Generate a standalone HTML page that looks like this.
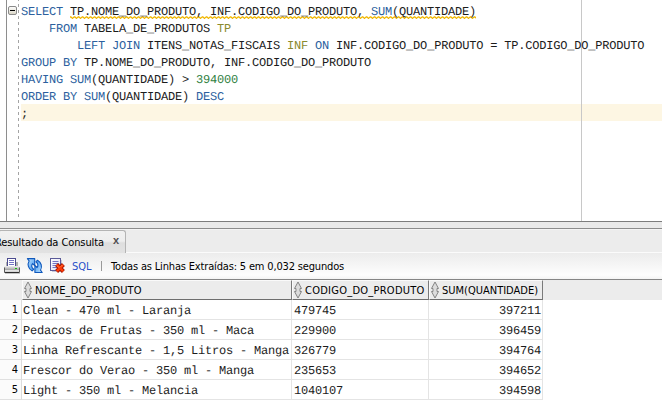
<!DOCTYPE html>
<html><head><meta charset="utf-8">
<style>
html,body{margin:0;padding:0;}
body{width:662px;height:417px;background:#fff;position:relative;overflow:hidden;font-family:"Liberation Sans",sans-serif;}
div,svg{position:absolute;}
.ed{left:0;top:0;width:662px;height:221px;background:#fff;}
.mono{font-family:"Liberation Mono",monospace;font-size:12px;letter-spacing:-0.2px;white-space:pre;color:#1c1c1c;text-rendering:geometricPrecision;}
.code{left:21px;top:4px;line-height:17px;}
.k{color:#2c5f9e;}
.a{color:#8c8a2e;}
.n{color:#2f7f3f;}
.hl{left:21px;top:104px;width:641px;height:17px;background:#fdf6e3;}
.margin{left:581px;top:0;width:1px;height:221px;background:#c8c8c8;}
.lb{left:6px;top:0;width:1px;height:221px;background:#8e8e8e;}
.gut{left:18px;top:0;width:1px;height:218px;background:repeating-linear-gradient(#a4a4a4 0,#a4a4a4 1px,#fff 1px,#fff 4px,#a4a4a4 4px,#a4a4a4 6px);}
.panel{left:0;top:221px;width:662px;height:196px;background:#ececec;}
.ui{font-family:"DejaVu Sans Condensed","Liberation Sans",sans-serif;font-size:11px;color:#000;white-space:nowrap;}
.tab{left:-2px;top:9px;width:128px;height:23px;border:1px solid #b4b4b4;border-bottom:none;border-radius:3px 3px 0 0;background:linear-gradient(#f1f1f1 0%,#eeeeee 46%,#dedede 54%,#e2e2e2 100%);box-sizing:border-box;}
.tb{left:0;top:32px;width:662px;height:26px;background:linear-gradient(#ececec 0%,#fdfdfd 85%,#f4f4f4 100%);}
.grid{left:0;top:58px;width:662px;height:138px;background:#fff;}
.hrow{left:0;top:0;width:662px;height:21px;background:#ececec;border-top:1px solid #858585;box-sizing:border-box;}
.hd{top:1px;height:20px;box-sizing:border-box;border-right:1px solid #7a7a7a;border-bottom:1px solid #6e6e6e;border-top:1px solid #fafafa;border-left:1px solid #fafafa;background:#ececec;}
.hd span{position:absolute;left:12px;top:3px;}
.row{left:0;width:543px;height:20px;}
.rn{left:0;top:0;width:22px;height:20px;box-sizing:border-box;border-bottom:1px solid #e0e0e0;border-right:1px solid #dcdcdc;text-align:right;padding-right:3px;line-height:19px;background:#fbfbfb}
.c{top:0;height:20px;box-sizing:border-box;border-bottom:1px solid #e4e4e4;border-right:1px solid #e4e4e4;line-height:22px;padding-left:1px;background:#fff;overflow:hidden}
.c.r{text-align:right;padding-right:1px}
.c.b{padding-left:2px}
</style></head><body>
<div class="ed">
<div class="hl"></div>
<div class="lb"></div>
<svg style="left:0;top:0" width="662" height="30" viewBox="0 0 662 30">
<defs>
<pattern id="wv" x="70" y="16" width="4" height="3" patternUnits="userSpaceOnUse"><path d="M0.5,0.5 L2.5,2.5 L4.5,0.5 M-1.5,2.5 L0.5,0.5" fill="none" stroke="#f0b600" stroke-width="1.15"/></pattern>
<linearGradient id="fg" x1="0" y1="0" x2="0" y2="1"><stop offset="0" stop-color="#ffffff"/><stop offset="1" stop-color="#d8d4c4"/></linearGradient>
</defs>
<rect x="70" y="16" width="406" height="3" fill="url(#wv)"/>
<rect x="8.5" y="6.5" width="8" height="8" rx="1.5" fill="url(#fg)" stroke="#8a8a8a"/><rect x="10" y="10" width="5" height="1" fill="#000"/></svg>
<div class="gut"></div>
<div class="margin"></div>
<div class="code mono"><span class="k">SELECT</span> TP.NOME_DO_PRODUTO, INF.CODIGO_DO_PRODUTO, <span class="k">SUM</span>(QUANTIDADE)
    <span class="k">FROM</span> TABELA_DE_PRODUTOS <span class="a">TP</span>
        <span class="k">LEFT JOIN</span> ITENS_NOTAS_FISCAIS <span class="a">INF</span> <span class="k">ON</span> INF.CODIGO_DO_PRODUTO = TP.CODIGO_DO_PRODUTO
<span class="k">GROUP BY</span> TP.NOME_DO_PRODUTO, INF.CODIGO_DO_PRODUTO
<span class="k">HAVING</span> <span class="k">SUM</span>(QUANTIDADE) &gt; <span class="n">394000</span>
<span class="k">ORDER BY</span> <span class="k">SUM</span>(QUANTIDADE) <span class="k">DESC</span>
;</div>
</div>
<div class="panel">
<div style="left:0;top:0;width:662px;height:1px;background:#7c7c7c"></div>
<div style="left:0;top:1px;width:662px;height:6px;background:#e9e9e9"></div>
<div style="left:0;top:7px;width:662px;height:1px;background:#8c8c8c"></div>
<div style="left:0;top:8px;width:662px;height:1px;background:#f4f4f4"></div>
<div class="tab"></div>
<div style="left:126px;top:31px;width:536px;height:1px;background:#fbfbfb"></div>
<div class="ui" style="left:-5px;top:15px;letter-spacing:-0.09px">Resultado da Consulta</div>
<div class="ui" style="left:113px;top:13px;font-weight:bold;color:#505050;font-family:'Liberation Sans',sans-serif">x</div>
<div class="tb"></div>
<svg style="left:0;top:33px" width="70" height="24" viewBox="0 254 70 24">
<defs>
<linearGradient id="pb" x1="0" y1="0" x2="0" y2="1"><stop offset="0" stop-color="#f2f2f2"/><stop offset="0.3" stop-color="#c4c4c4"/><stop offset="0.55" stop-color="#a4a4a4"/><stop offset="0.62" stop-color="#e6e6e6"/><stop offset="0.85" stop-color="#d0d0d0"/><stop offset="0.86" stop-color="#2c2c2c"/><stop offset="1" stop-color="#2c2c2c"/></linearGradient>
<linearGradient id="ar" x1="0" y1="0" x2="1" y2="1"><stop offset="0" stop-color="#c4e4ff"/><stop offset="1" stop-color="#2f8fee"/></linearGradient>
<linearGradient id="pg" x1="0" y1="0" x2="1" y2="1"><stop offset="0" stop-color="#ffffff"/><stop offset="1" stop-color="#dcdcf4"/></linearGradient>
</defs>
<rect x="6" y="262" width="12" height="5" fill="#b0b0b0"/>
<rect x="7.5" y="258.5" width="8" height="8" fill="#fff" stroke="#4c4c90"/>
<path d="M9,260.5h5M9,262.5h5M9,264.5h5" stroke="#7474c4" stroke-width="1"/>
<rect x="4" y="266" width="16" height="7" rx="1.5" fill="url(#pb)"/>
<path d="M4.5,267.5v4.5M19.5,267.5v4.5" stroke="#5a5a5a" stroke-width="1"/>
<rect x="15" y="268" width="2" height="1" fill="#10c010"/>
<rect x="5" y="273" width="15" height="1" fill="#c4c4c4"/>
<g transform="translate(27,258)">
<path d="M0.4,0.6 L7.7,0.6 L7.7,7.7 L5.6,5.6 C4.2,7 4.3,9.6 6.7,11.3 L5.1,12.9 C1.2,10.6 0.1,6.4 2.1,2.9 Z" fill="url(#ar)" stroke="#0f58bc" stroke-width="1.1" stroke-linejoin="round"/>
<path d="M0.4,0.6 L7.7,0.6 L7.7,7.7 L5.6,5.6 C4.2,7 4.3,9.6 6.7,11.3 L5.1,12.9 C1.2,10.6 0.1,6.4 2.1,2.9 Z" fill="url(#ar)" stroke="#0f58bc" stroke-width="1.1" stroke-linejoin="round" transform="rotate(180 7.8 7.55)"/>
</g>
<rect x="61" y="260" width="1" height="11" fill="#c8c8d8"/><rect x="52" y="271" width="10" height="1" fill="#c8c8d8"/>
<rect x="50.5" y="258.5" width="10" height="12" fill="url(#pg)" stroke="#5a5a98"/>
<path d="M52.5,261.5h6M52.5,263.5h6M52.5,265.5h6M52.5,267.5h6" stroke="#7474c4" stroke-width="1"/>
<path d="M56.6,264.6 L63.4,271.4 M63.4,264.6 L56.6,271.4" stroke="#a01400" stroke-width="4.2" stroke-linecap="butt"/>
<path d="M56.9,264.9 L63.1,271.1 M63.1,264.9 L56.9,271.1" stroke="#ff3c08" stroke-width="2.4" stroke-linecap="butt"/>
<path d="M57,265.6 L59.2,267.8 M62.4,265 L60.6,266.8" stroke="#ff8a50" stroke-width="0.9"/>
</svg>
<div class="ui" style="left:72px;top:39px;color:#2850c8">SQL</div>
<div style="left:101px;top:40px;width:1px;height:10px;background:#9a9a9a"></div>
<div class="ui" style="left:111px;top:39px;letter-spacing:-0.165px">Todas as Linhas Extraídas: 5 em 0,032 segundos</div>
<div class="grid">
<div class="hrow"></div>
<div class="hd ui" style="left:22px;width:270px"><svg style="left:0;top:0" width="11" height="18" viewBox="0 0 11 18"><path d="M5,1 L8.5,7.5 L7,7.5 L7,10.5 L8.5,10.5 L5,17 L1.5,10.5 L3,10.5 L3,7.5 L1.5,7.5 Z" fill="#dcdcdc" stroke="#858585" stroke-width="1" stroke-linejoin="round"/></svg><span style="letter-spacing:0.14px">NOME_DO_PRODUTO</span></div>
<div class="hd ui" style="left:292px;width:137px"><svg style="left:0;top:0" width="11" height="18" viewBox="0 0 11 18"><path d="M5,1 L8.5,7.5 L7,7.5 L7,10.5 L8.5,10.5 L5,17 L1.5,10.5 L3,10.5 L3,7.5 L1.5,7.5 Z" fill="#dcdcdc" stroke="#858585" stroke-width="1" stroke-linejoin="round"/></svg><span style="letter-spacing:0.25px">CODIGO_DO_PRODUTO</span></div>
<div class="hd ui" style="left:429px;width:114px"><svg style="left:0;top:0" width="11" height="18" viewBox="0 0 11 18"><path d="M5,1 L8.5,7.5 L7,7.5 L7,10.5 L8.5,10.5 L5,17 L1.5,10.5 L3,10.5 L3,7.5 L1.5,7.5 Z" fill="#dcdcdc" stroke="#858585" stroke-width="1" stroke-linejoin="round"/></svg><span>SUM(QUANTIDADE)</span></div>
<div class="row" style="top:21px"><div class="rn ui">1</div><div class="c mono" style="left:22px;width:270px">Clean - 470 ml - Laranja</div><div class="c mono b" style="left:292px;width:137px">479745</div><div class="c mono r" style="left:429px;width:114px">397211</div></div>
<div class="row" style="top:41px"><div class="rn ui">2</div><div class="c mono" style="left:22px;width:270px">Pedacos de Frutas - 350 ml - Maca</div><div class="c mono b" style="left:292px;width:137px">229900</div><div class="c mono r" style="left:429px;width:114px">396459</div></div>
<div class="row" style="top:61px"><div class="rn ui">3</div><div class="c mono" style="left:22px;width:270px">Linha Refrescante - 1,5 Litros - Manga</div><div class="c mono b" style="left:292px;width:137px">326779</div><div class="c mono r" style="left:429px;width:114px">394764</div></div>
<div class="row" style="top:81px"><div class="rn ui">4</div><div class="c mono" style="left:22px;width:270px">Frescor do Verao - 350 ml - Manga</div><div class="c mono b" style="left:292px;width:137px">235653</div><div class="c mono r" style="left:429px;width:114px">394652</div></div>
<div class="row" style="top:101px"><div class="rn ui">5</div><div class="c mono" style="left:22px;width:270px">Light - 350 ml - Melancia</div><div class="c mono b" style="left:292px;width:137px">1040107</div><div class="c mono r" style="left:429px;width:114px">394598</div></div>
</div>
</div>
</body></html>
